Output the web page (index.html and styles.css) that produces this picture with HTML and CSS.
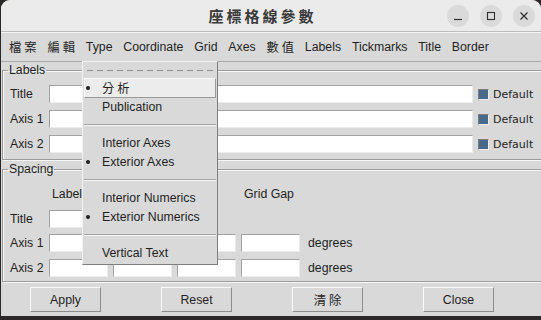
FILE: index.html
```html
<!DOCTYPE html>
<html lang="zh-Hant">

<head>
  <meta charset="UTF-8">
  <meta name="viewport" content="width=device-width, initial-scale=1.0">
  <title>座標格線參數</title>
  <link rel="stylesheet" href="styles.css">
</head>

<body>
  <div class="window">
    <div class="titlebar">
      <h1 class="title">座標格線參數</h1>
      <div class="wm-buttons">
        <span class="wm-btn">
          <svg width="10" height="10" viewBox="0 0 10 10"><path d="M1 8.5h8" stroke="#2e2e2e" stroke-width="1.2" /></svg>
        </span>
        <span class="wm-btn">
          <svg width="10" height="10" viewBox="0 0 10 10"><rect x="1.5" y="1.5" width="7" height="7" fill="none" stroke="#2e2e2e" stroke-width="1.1" /></svg>
        </span>
        <span class="wm-btn">
          <svg width="10" height="10" viewBox="0 0 10 10"><path d="M1.5 1.5l7 7M8.5 1.5l-7 7" stroke="#2e2e2e" stroke-width="1.2" /></svg>
        </span>
      </div>
    </div>

    <div class="menubar">
      <span class="menu-item cjk">檔案</span>
      <span class="menu-item cjk">編輯</span>
      <span class="menu-item">Type</span>
      <span class="menu-item">Coordinate</span>
      <span class="menu-item">Grid</span>
      <span class="menu-item">Axes</span>
      <span class="menu-item cjk">數值</span>
      <span class="menu-item">Labels</span>
      <span class="menu-item">Tickmarks</span>
      <span class="menu-item">Title</span>
      <span class="menu-item">Border</span>
    </div>

    <div class="content">
      <fieldset class="group labels">
        <legend>Labels</legend>
        <div class="label-grid">
          <label>Title</label>
          <input class="entry" type="text">
          <span class="check"><span class="box"></span>Default</span>

          <label>Axis 1</label>
          <input class="entry" type="text">
          <span class="check"><span class="box"></span>Default</span>

          <label>Axis 2</label>
          <input class="entry" type="text">
          <span class="check"><span class="box"></span>Default</span>
        </div>
      </fieldset>

      <fieldset class="group spacing">
        <legend>Spacing</legend>
        <div class="spacing-grid">
          <span></span>
          <span class="head">Label</span>
          <span class="head"></span>
          <span class="head"></span>
          <span class="head">Grid Gap</span>
          <span></span>

          <label>Title</label>
          <input class="entry" type="text">
          <input class="entry" type="text">
          <span></span>
          <span></span>
          <span></span>

          <label>Axis 1</label>
          <input class="entry" type="text">
          <input class="entry" type="text">
          <input class="entry" type="text">
          <input class="entry" type="text">
          <span class="unit">degrees</span>

          <label>Axis 2</label>
          <input class="entry" type="text">
          <input class="entry" type="text">
          <input class="entry" type="text">
          <input class="entry" type="text">
          <span class="unit">degrees</span>
        </div>
      </fieldset>
    </div>

    <div class="buttons">
      <button class="btn">Apply</button>
      <button class="btn">Reset</button>
      <button class="btn cjk">清除</button>
      <button class="btn">Close</button>
    </div>

    <!-- open "Type" menu -->
    <div class="dropdown">
      <div class="tearoff"></div>
      <div class="drop-item selected active cjk">分析</div>
      <div class="drop-item">Publication</div>
      <div class="separator"></div>
      <div class="drop-item">Interior Axes</div>
      <div class="drop-item selected">Exterior Axes</div>
      <div class="separator"></div>
      <div class="drop-item">Interior Numerics</div>
      <div class="drop-item selected">Exterior Numerics</div>
      <div class="separator"></div>
      <div class="drop-item">Vertical Text</div>
    </div>
  </div>
</body>

</html>
```

FILE: styles.css
```css
body {
  margin: 0;
  background: #2b2927;
  font-family: 'Liberation Sans', 'Noto Sans CJK TC', sans-serif;
  font-size: 12.3px;
  color: #1f1f1f;
}

.window {
  position: relative;
  width: 540px;
  height: 316px;
  margin-left: 1px;
  background: #d9d9d9;
  overflow: hidden;
  border-radius: 9px 9px 0 0;
}

.cjk {
  font-family: 'Noto Sans CJK TC', sans-serif;
  letter-spacing: 3px;
}

/* title bar */
.titlebar {
  display: flex;
  align-items: center;
  height: 32px;
  background: #ebebeb;
  border-bottom: 1px solid #bdbdbd;
  box-sizing: border-box;
}

.title {
  flex: 1;
  margin: 0;
  padding-left: 77px;
  text-align: center;
  font-family: 'Noto Sans CJK TC', sans-serif;
  font-size: 15px;
  font-weight: bold;
  letter-spacing: 3px;
  color: #3a3a3a;
}

.wm-buttons {
  display: flex;
  gap: 11px;
  padding-right: 6px;
}

.wm-btn {
  display: flex;
  align-items: center;
  justify-content: center;
  width: 22px;
  height: 22px;
  border-radius: 50%;
  background: #dadada;
}

/* menu bar */
.menubar {
  display: flex;
  align-items: center;
  gap: 10.8px;
  height: 30px;
  padding-left: 8px;
  border-top: 1px solid #f4f4f4;
  border-bottom: 1px solid #a9a9a9;
  box-sizing: border-box;
}

.menu-item.cjk {
  margin-right: -3px;
}

/* groups */
.content {
  padding-left: 1px;
}

.group {
  margin: 0 -4px 0 0;
  padding: 7px 0 6px 7px;
  border: 1px solid #9c9c9c;
  box-shadow: inset 1px 1px 0 #f6f6f6, 1px 1px 0 #f6f6f6;
}

.group legend {
  margin-left: -2px;
  padding: 0 1px;
  line-height: 16px;
}

.spacing {
  margin-top: 1px;
  padding-top: 9px;
  padding-bottom: 4px;
}

.label-grid {
  display: grid;
  grid-template-columns: 34px 424px auto;
  column-gap: 5px;
  row-gap: 7px;
  align-items: center;
}

.spacing-grid {
  display: grid;
  grid-template-columns: 34px 59px 59px 59px 59px auto;
  grid-template-rows: 16px 18px 18px 18px;
  column-gap: 5px;
  row-gap: 7px;
  align-items: center;
}

.spacing-grid .head {
  padding-left: 3px;
}

.spacing-grid > :nth-child(n+7):nth-child(-n+12) {
  margin-top: 1px;
}

.unit {
  padding-left: 3px;
}

.entry {
  box-sizing: border-box;
  width: 100%;
  height: 18px;
  margin: 0;
  padding: 0 2px;
  background: #fff;
  border: 1px solid;
  border-color: #a2a2a2 #ececec #ececec #a2a2a2;
  outline: none;
  font: inherit;
}

.check {
  display: flex;
  align-items: center;
  gap: 4px;
  font-family: 'DejaVu Sans', sans-serif;
  font-size: 11px;
  white-space: nowrap;
}

.box {
  width: 9px;
  height: 9px;
  background: #48698a;
  border: 1px solid;
  border-color: #7d7d7d #ededed #ededed #7d7d7d;
}

/* bottom buttons */
.buttons {
  display: grid;
  grid-template-columns: repeat(4, 131px);
  justify-items: center;
  margin-left: -1px;
  padding-top: 5px;
}

.btn {
  box-sizing: border-box;
  width: 71px;
  height: 25px;
  padding: 0;
  background: #d9d9d9;
  border: 1px solid;
  border-color: #fbfbfb #8c8c8c #8c8c8c #fbfbfb;
  font: inherit;
  color: #1f1f1f;
}

.btn.cjk {
  font-family: 'Noto Sans CJK TC', sans-serif;
  padding-left: 3px;
}

/* dropdown of the Type menu */
.dropdown {
  position: absolute;
  left: 81px;
  top: 61px;
  width: 136px;
  background: #d9d9d9;
  border: 1px solid;
  border-color: #f2f2f2 #7f7f7f #7f7f7f #f2f2f2;
  box-sizing: border-box;
  padding: 0 1px 1px;
}

.tearoff {
  height: 16px;
  background: repeating-linear-gradient(to right, #8e8e8e 0 6px, transparent 6px 10px) 3px 8px / calc(100% - 6px) 1px no-repeat;
}

.drop-item {
  display: flex;
  align-items: center;
  height: 19.5px;
  padding-left: 2px;
  box-sizing: border-box;
}

.drop-item::before {
  content: "";
  width: 4px;
  height: 4px;
  margin-right: 12px;
  border-radius: 50%;
}

.drop-item.selected::before {
  background: #1f1f1f;
}

.drop-item.active {
  background: #ececec;
  border: 1px solid;
  border-color: #fafafa #9a9a9a #9a9a9a #fafafa;
  padding-left: 1px;
}

.separator {
  height: 16px;
  background: linear-gradient(#a3a3a3, #a3a3a3) 0 7px / 100% 1px no-repeat,
    linear-gradient(#f6f6f6, #f6f6f6) 0 8px / 100% 1px no-repeat;
}
```
